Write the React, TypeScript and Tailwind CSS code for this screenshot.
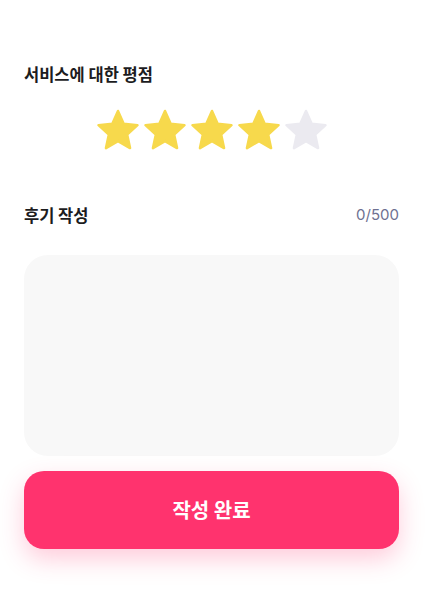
const starPoints = (() => {
  const cx = 22;
  const cy = 22.5;
  const R = 20.5;
  const r = R * 0.47;
  const pts: string[] = [];
  for (let i = 0; i < 10; i++) {
    const a = ((-90 + i * 36) * Math.PI) / 180;
    const rad = i % 2 === 0 ? R : r;
    pts.push(`${(cx + rad * Math.cos(a)).toFixed(2)},${(cy + rad * Math.sin(a)).toFixed(2)}`);
  }
  return pts.join(" ");
})();

function Star({ filled }: { filled: boolean }) {
  const color = filled ? "#F7D94C" : "#EBEAF0";
  return (
    <svg width={44} height={42} viewBox="0 0 44 42">
      <polygon points={starPoints} fill={color} stroke={color} strokeWidth={2.5} strokeLinejoin="round" />
    </svg>
  );
}

export default function App() {
  const rating = 4;
  return (
    <div className="min-h-screen bg-white pl-6 pt-[62px] font-['Noto_Sans_CJK_KR','Noto_Sans',sans-serif] text-[#1c1c1e]">
      <div className="w-[375px]">
        <h2 className="text-[16.5px] font-bold leading-6">서비스에 대한 평점</h2>
        <div className="mt-[23px] flex justify-center gap-[3px]">
          {[1, 2, 3, 4, 5].map((n) => (
            <Star key={n} filled={n <= rating} />
          ))}
        </div>
        <div className="mt-[52px] flex items-center justify-between">
          <h2 className="text-[16.5px] font-bold leading-6">후기 작성</h2>
          <span className="text-[15px] leading-6 text-[#6e7191] font-['Inter',sans-serif]">0/500</span>
        </div>
        <textarea className="mt-[28px] block h-[201px] w-full resize-none rounded-[24px] bg-[#f8f8f8] p-5 text-[15px] outline-none" />
        <button className="mt-[15px] flex h-[78px] w-full items-center justify-center rounded-[20px] bg-[#ff336e] text-xl font-bold text-white shadow-[0_10px_24px_rgba(255,51,110,0.25)]">
          작성 완료
        </button>
      </div>
    </div>
  );
}
